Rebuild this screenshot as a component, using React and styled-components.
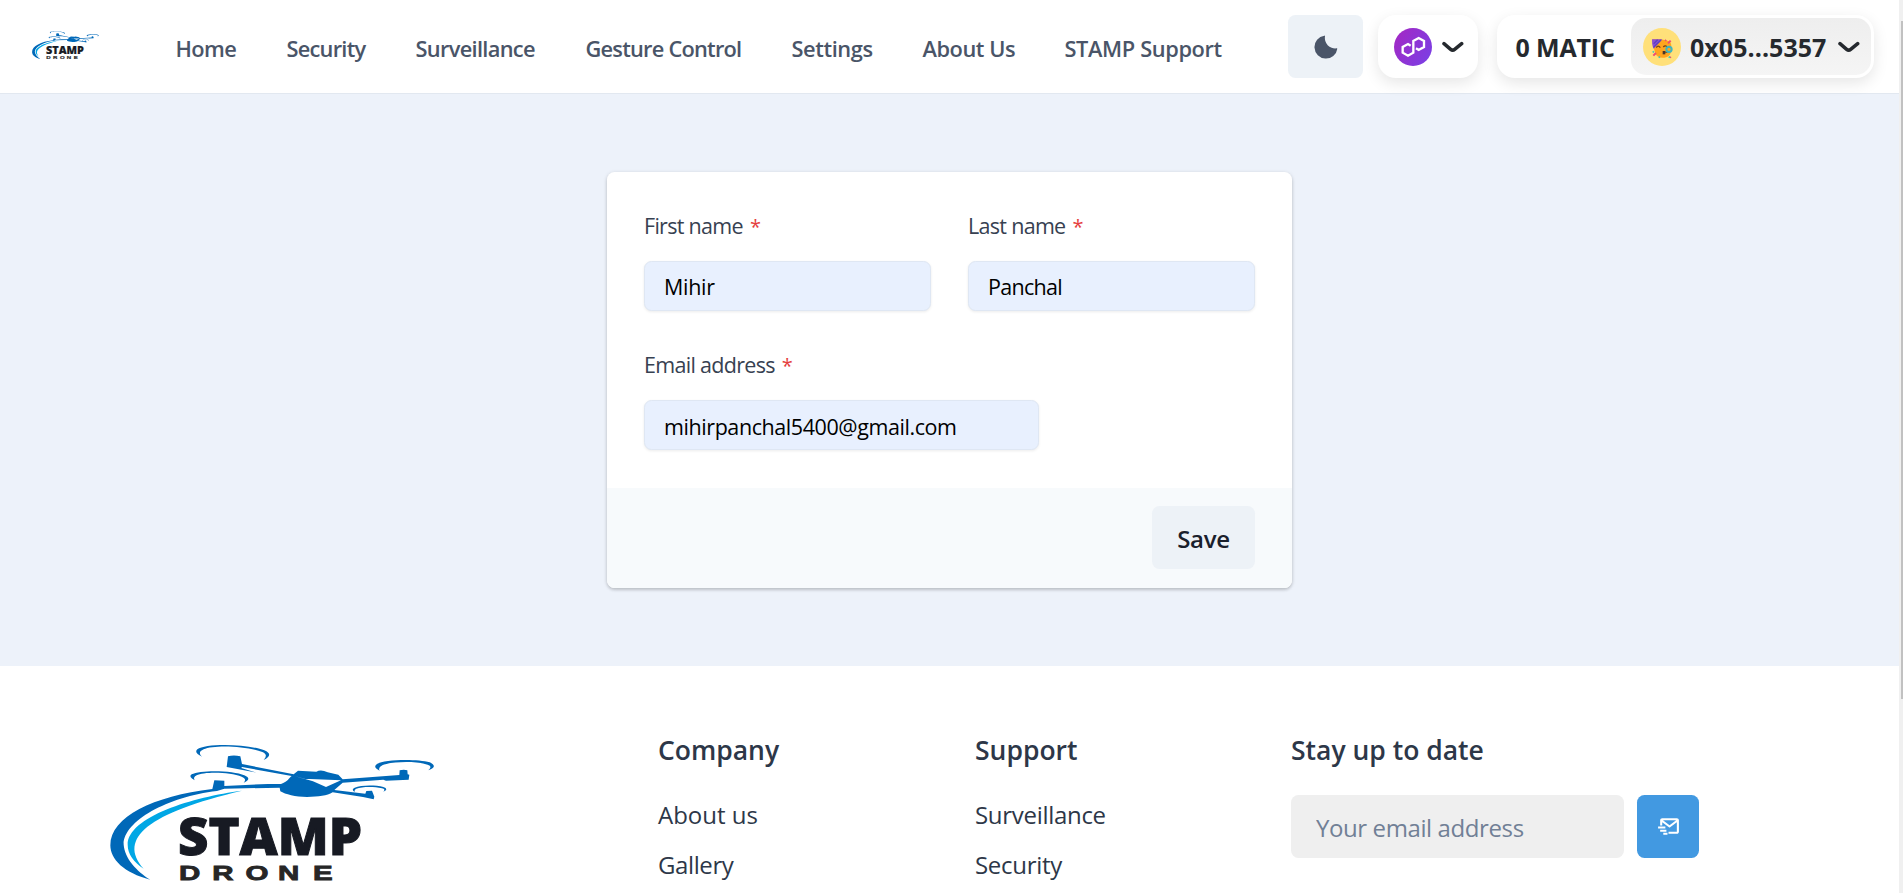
import React from 'react';
import styled, { createGlobalStyle } from 'styled-components';
import { BiMailSend } from 'react-icons/bi';

const GlobalStyle = createGlobalStyle`
  *, *::before, *::after { box-sizing: border-box; }
  html, body { margin: 0; height: 893px; overflow: hidden; background: #fff; }
  body {
    font-family: "Segoe UI", "Open Sans", "Noto Sans", sans-serif;
    color: #2d3748;
  }
  a { color: inherit; text-decoration: none; }
  button, input { font: inherit; margin: 0; border: 0; }
  ul, h2 { margin: 0; padding: 0; list-style: none; }
`;

const Window = styled.div`
  display: flex;
  height: 893px;
  overflow: hidden;
`;

const Page = styled.div`
  flex: 1;
  min-width: 0;
`;

const ScrollTrack = styled.div`
  width: 4px;
  padding: 21px 0 0 2px;
  background: #f0f0f0;
`;

const ScrollThumb = styled.div`
  height: 678px;
  background: #c1c1c1;
`;

const Header = styled.header`
  position: relative;
  display: flex;
  align-items: center;
  height: 94px;
  padding: 0 25px 0 32px;
  background: #fff;
  border-bottom: 1px solid #e2e8f0;
`;

const BrandLink = styled.a`
  display: flex;
  width: 143.5px;
  padding-bottom: 2px;
`;

const Nav = styled.nav`
  display: flex;
  gap: 50px;
  padding-top: 5px;
`;

const NavLink = styled.a`
  width: ${(p) => p.$width}px;
  font-size: 21.8px;
  line-height: 32px;
  font-weight: 600;
  letter-spacing: ${(p) => p.$tracking || 0}px;
  white-space: nowrap;
  color: #4a5568;
`;

const Actions = styled.div`
  display: flex;
  margin-left: auto;
`;

const ThemeToggle = styled.button`
  display: flex;
  align-items: center;
  justify-content: center;
  width: 75px;
  height: 63px;
  margin-right: 15px;
  padding: 0;
  border-radius: 7.5px;
  background: #edf2f7;
`;

const Pill = styled.div`
  display: flex;
  align-items: center;
  height: 63px;
  border-radius: 18px;
  background: #fff;
  box-shadow: 0 5px 15px rgba(0, 0, 0, 0.1);
  color: #25292e;
  font-size: 25px;
  font-weight: 700;
  white-space: nowrap;
`;

const NetworkPill = styled(Pill)`
  width: 100px;
  margin-right: 19px;
  padding-left: 16px;
  gap: 10px;
`;

const WalletPill = styled(Pill)`
  width: 377px;
  padding-right: 3px;
`;

const Balance = styled.span`
  flex: 1;
  padding: 1px 0 0 18.5px;
  letter-spacing: -0.15px;
`;

const Account = styled.div`
  display: flex;
  align-items: center;
  width: 240px;
  height: 57px;
  padding-left: 12px;
  border-radius: 15px;
  background: linear-gradient(#eeeeee, #f5f5f5);
`;

const Address = styled.span`
  width: 147px;
  padding: 1px 0 0 9px;
  margin-right: 10px;
  letter-spacing: 0.05px;
`;

const Main = styled.main`
  height: 572px;
  padding: 78px 607px 0;
  background: #edf2fa;
`;

const Card = styled.form`
  width: 685px;
  height: 416px;
  border-radius: 7.5px;
  overflow: hidden;
  background: #fff;
  box-shadow: 0 1px 4px rgba(0, 0, 0, 0.14), 0 2px 3px rgba(0, 0, 0, 0.12);
`;

const CardBody = styled.div`
  display: grid;
  grid-template-columns: 287px 287px;
  column-gap: 37px;
  row-gap: 36px;
  height: 316px;
  padding: 38px 37px 0;
  align-content: start;
`;

const Field = styled.label`
  display: block;
  width: ${(p) => p.$width || 287}px;
  height: 103px;
`;

const FieldLabel = styled.span`
  display: block;
  height: 51px;
  font-size: 21.5px;
  line-height: 32px;
  letter-spacing: -0.7px;
  color: #374151;
  white-space: nowrap;
`;

const Required = styled.span`
  margin-left: 7px;
  font-size: 20px;
  color: #e53e3e;
`;

const TextInput = styled.input`
  display: block;
  width: 100%;
  height: 50px;
  padding: ${(p) => p.$drop || 1}px 19px 0;
  border: 1px solid #dfe7f3;
  border-radius: 7.5px;
  background: #e8f0fe;
  box-shadow: 0 1px 3px rgba(0, 0, 0, 0.08);
  font-size: 21.5px;
  letter-spacing: ${(p) => p.$tracking || 0}px;
  color: #000;
`;

const CardFooter = styled.div`
  display: flex;
  justify-content: flex-end;
  height: 100px;
  padding: 18px 37px 0;
  background: #f7fafc;
`;

const SaveButton = styled.button`
  width: 103px;
  height: 63px;
  padding: 1px 0 0;
  border-radius: 7.5px;
  background: #edf2f7;
  font-size: 24px;
  font-weight: 600;
  letter-spacing: -0.3px;
  color: #1a202c;
`;

const Footer = styled.footer`
  display: grid;
  grid-template-columns: 548px 317px 316px 1fr;
  height: 227px;
  padding: 65px 0 0 110px;
  background: #fff;
`;

const FooterBrand = styled.div`
  padding-top: 13px;
`;

const FooterTitle = styled.h2`
  height: 64px;
  font-size: 26.5px;
  font-weight: 600;
  line-height: 38px;
  letter-spacing: ${(p) => p.$tracking || 0}px;
  white-space: nowrap;
`;

const FooterLink = styled.li`
  height: 50px;
  font-size: 24px;
  line-height: 40px;
  letter-spacing: ${(p) => p.$tracking || 0}px;
`;

const Newsletter = styled.div`
  display: flex;
  gap: 13px;
`;

const NewsletterInput = styled.input`
  width: 333px;
  height: 63px;
  padding: 2px 25px 0;
  border-radius: 7.5px;
  background: #efefef;
  font-size: 24px;
  letter-spacing: -0.4px;
  &::placeholder { color: #718096; opacity: 1; }
`;

const SubscribeButton = styled.button`
  display: flex;
  align-items: center;
  justify-content: center;
  width: 62px;
  height: 63px;
  padding: 0;
  border-radius: 7.5px;
  background: #4299e1;
  color: #fff;
`;

const LogoSvg = styled.svg`
  display: block;
  overflow: visible;
`;

const Logo = ({ width }) => (
  <LogoSvg width={width} height={(width * 412) / 975} viewBox="59 72 975 412" aria-label="Stamp Drone">
    <g fill="#0068b8">
      <path d="M180 479C100 459 60 418 60 376C60 290 190 228 366 207L372 181L402 182L402 198C460 194 520 192 572 192C592 185 596 174 604 168L455 141L453 144L498 158L409 141L413 109Q430 104 450 109L455 132L610 163L623 152L678 155Q692 147 712 157L744 164L757 178L927 165L928 151Q941 147 951 151L952 163L957 164L955 179L887 182L879 179L757 188L732 210L825 221L828 213L845 212L852 230L850 238L818 231L727 217C710 228 685 230 650 231C615 231 585 223 570 214L568 203L402 206L380 213C230 230 98 305 100 374C103 415 139 454 180 479Z" />
      <path d="M335 110Q310 98 321 88C345 69 470 71 522 91Q552 104 520 120Q535 104 516 96C470 78 370 74 340 88Q320 97 335 110Z" />
      <path d="M313 181Q293 170 304 163C330 149 430 151 462 166Q487 177 460 188Q471 176 454 170C420 156 340 155 319 166Q307 172 313 181Z" />
      <path d="M868 152Q846 142 860 132C880 118 980 116 1018 127Q1045 140 1014 151Q1028 139 1012 134C975 122 900 125 876 136Q862 143 868 152Z" />
      <path d="M794 216Q781 209 793 203C812 195 855 195 879 201Q897 207 879 215Q887 208 875 205C850 199 815 200 798 206Q790 211 794 216Z" />
    </g>
    <path fill="#fff" d="M613 168L640 176L752 181L707 201L668 184Z" />
    <path fill="#00a7e5" d="M455 212C310 230 112 290 112 374C112 402 130 426 160 446C80 355 175 278 455 212Z" />
    <text x="263" y="404" fontFamily="Open Sans, sans-serif" fontWeight="800" fontSize="155" textLength="552" lengthAdjust="spacingAndGlyphs" fill="#171a23" stroke="#171a23" strokeWidth="3">STAMP</text>
    <g transform="scale(1.45 1)">
      <text x="183.5 252.5 321 388.5 460.5" y="479" fontFamily="Liberation Sans, sans-serif" fontWeight="700" fontSize="61" fill="#262626" stroke="#262626" strokeWidth="2.5">DRONE</text>
    </g>
  </LogoSvg>
);

const MoonIcon = () => (
  <svg width="24" height="24" viewBox="100 73 72 72">
    <path fill="#4a5568" d="M131 75A34.5 34.5 0 1 0 170 114Q170 112 167 113A31 31 0 0 1 133 77Q133 74 131 75Z" />
  </svg>
);

const Chevron = () => (
  <svg width="22" height="12" viewBox="485 91 66 36">
    <path d="M491 99L511 116Q517 121 523 116L544 99" fill="none" stroke="#25292e" strokeWidth="10.5" strokeLinecap="round" strokeLinejoin="round" />
  </svg>
);

const PolygonIcon = () => (
  <svg width="38" height="38" viewBox="342 53 114 114">
    <defs>
      <linearGradient id="polygon" x1="0" y1="0.2" x2="1" y2="0.8">
        <stop offset="0" stopColor="#a229c5" />
        <stop offset="1" stopColor="#7b3fe4" />
      </linearGradient>
    </defs>
    <circle cx="399" cy="110" r="57" fill="url(#polygon)" />
    <path d="M392 106L384 101L368 110V127L384 136L400 127V92L416 83L432 92V110L416 119L408 114" fill="none" stroke="#fff" strokeWidth="7" />
  </svg>
);

const PartyAvatar = () => (
  <svg width="38" height="38" viewBox="0 0 114 114">
    <circle cx="57" cy="57" r="57" fill="#ffe07a" />
    <path d="M28 34H54L80 40Q88 50 84 70Q82 87 64 89Q42 91 37 76L33 62Z" fill="#ffa51f" />
    <path d="M27 34H58L31 62Q26 50 27 34Z" fill="#8a4fd0" />
    <path d="M32 47L44 35M32 58L54 36" stroke="#5b3fc4" strokeWidth="4" />
    <path d="M40 59Q45 50 52 59M61 57Q67 50 74 58" fill="none" stroke="#70421f" strokeWidth="4" />
    <path d="M59 69H67V79H59Z" fill="#4a3429" />
    <path d="M67 73L75 71" stroke="#4a3429" strokeWidth="4" />
    <circle cx="78" cy="64" r="8" fill="none" stroke="#3eb5c0" strokeWidth="6" />
    <path d="M75 46L83 38M31 83L39 75" stroke="#f04a75" strokeWidth="6" />
    <path d="M66 35l4 4M82 86l1 4" stroke="#f04a75" strokeWidth="4" />
    <path d="M29 70l4 3M47 86l4 3M77 86l4 3" stroke="#3fc5bc" strokeWidth="5" />
  </svg>
);

const navItems = [
  { label: 'Home', width: 61, tracking: -0.6 },
  { label: 'Security', width: 79, tracking: -0.75 },
  { label: 'Surveillance', width: 120, tracking: -0.68 },
  { label: 'Gesture Control', width: 156, tracking: -0.77 },
  { label: 'Settings', width: 81, tracking: -0.4 },
  { label: 'About Us', width: 92, tracking: -0.45 },
  { label: 'STAMP Support', width: 158, tracking: -0.37 },
];

const fields = [
  { label: 'First name', value: 'Mihir', tracking: -0.3 },
  { label: 'Last name', value: 'Panchal', tracking: -0.7 },
  { label: 'Email address', value: 'mihirpanchal5400@gmail.com', width: 395, tracking: -0.42, drop: 3 },
];

const footerColumns = [
  {
    title: 'Company',
    links: [{ label: 'About us' }, { label: 'Gallery', tracking: -0.4 }],
  },
  {
    title: 'Support',
    links: [{ label: 'Surveillance', tracking: -0.3 }, { label: 'Security', tracking: -0.3 }],
  },
];

export default function App() {
  return (
    <Window>
      <GlobalStyle />
      <Page>
        <Header>
          <BrandLink href="#"><Logo width={67} /></BrandLink>
          <Nav>
            {navItems.map((item) => (
              <NavLink key={item.label} href="#" $width={item.width} $tracking={item.tracking}>
                {item.label}
              </NavLink>
            ))}
          </Nav>
          <Actions>
            <ThemeToggle aria-label="Toggle theme"><MoonIcon /></ThemeToggle>
            <NetworkPill><PolygonIcon /><Chevron /></NetworkPill>
            <WalletPill>
              <Balance>0 MATIC</Balance>
              <Account>
                <PartyAvatar />
                <Address>0x05...5357</Address>
                <Chevron />
              </Account>
            </WalletPill>
          </Actions>
        </Header>
        <Main>
          <Card>
            <CardBody>
              {fields.map((field) => (
                <Field key={field.label} $width={field.width}>
                  <FieldLabel>{field.label}<Required>*</Required></FieldLabel>
                  <TextInput defaultValue={field.value} $tracking={field.tracking} $drop={field.drop} />
                </Field>
              ))}
            </CardBody>
            <CardFooter><SaveButton type="button">Save</SaveButton></CardFooter>
          </Card>
        </Main>
        <Footer>
          <FooterBrand><Logo width={325} /></FooterBrand>
          {footerColumns.map((column) => (
            <div key={column.title}>
              <FooterTitle>{column.title}</FooterTitle>
              <ul>
                {column.links.map((link) => (
                  <FooterLink key={link.label} $tracking={link.tracking}>{link.label}</FooterLink>
                ))}
              </ul>
            </div>
          ))}
          <div>
            <FooterTitle>Stay up to date</FooterTitle>
            <Newsletter>
              <NewsletterInput placeholder="Your email address" />
              <SubscribeButton aria-label="Subscribe"><BiMailSend size={25} /></SubscribeButton>
            </Newsletter>
          </div>
        </Footer>
      </Page>
      <ScrollTrack><ScrollThumb /></ScrollTrack>
    </Window>
  );
}
